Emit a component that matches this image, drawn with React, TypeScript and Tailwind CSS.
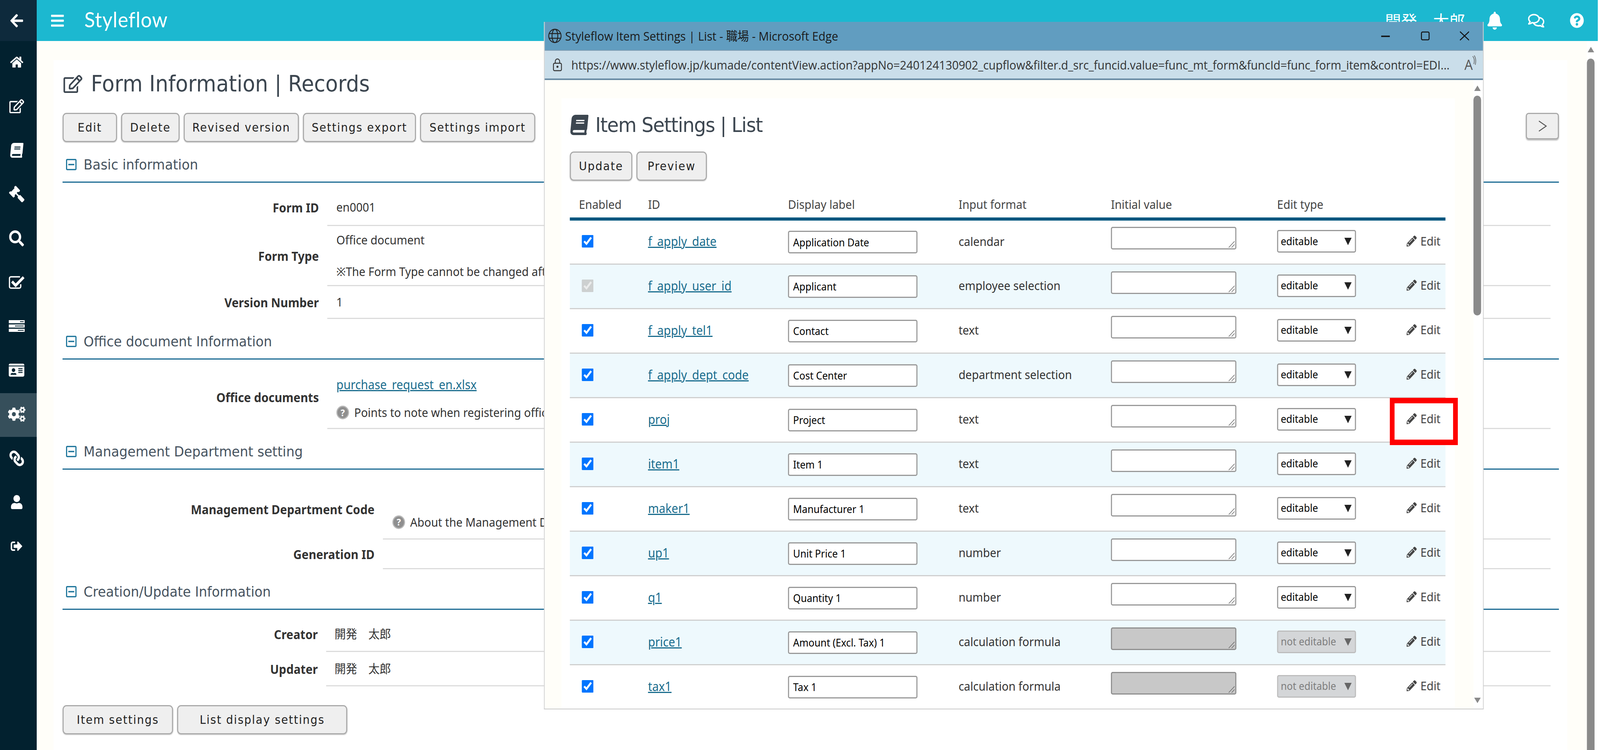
import React from 'react';
import { FaArrowLeft, FaHome, FaRegEdit, FaBook, FaGavel, FaSearch, FaIdCard, FaCogs, FaLink, FaUser, FaSignOutAlt, FaBars, FaBell, FaRegComments, FaQuestionCircle, FaRegMinusSquare, FaPencilAlt } from 'react-icons/fa';

function TasksIcon() {
  return (
    <svg viewBox="0 0 44 30" className="w-[44px] h-[30px]">
      <rect x="0" y="0" width="44" height="8" fill="#fff" />
      <rect x="0" y="11" width="44" height="8" fill="#fff" />
      <rect x="0" y="22" width="44" height="8" fill="#fff" />
      <rect x="31" y="3" width="10" height="2" fill="#02212f" />
      <rect x="17" y="14" width="24" height="2" fill="#02212f" />
      <rect x="25" y="25" width="16" height="2" fill="#02212f" />
    </svg>
  );
}

function CheckSquare() {
  return (
    <svg viewBox="0 0 44 34" className="w-[44px] h-[34px]" fill="none">
      <path d="M33 22v6a4 4 0 0 1-4 4H6a4 4 0 0 1-4-4V7a4 4 0 0 1 4-4h25" stroke="#fff" strokeWidth="3.5" />
      <path d="M9 15l10 10L41 4" stroke="#fff" strokeWidth="7" />
    </svg>
  );
}

function Btn({ label, className }: { label: string; className: string }) {
  return (
    <button className={`h-[75px] bg-[#efefef] border-[3px] border-[#aaaaaa] rounded-[11px] shadow-[0_2px_2px_rgba(0,0,0,0.15)] text-[#222] text-[30px] tracking-[2.2px] font-['DejaVu_Sans',sans-serif] ${className}`}>
      {label}
    </button>
  );
}

function Head({ label }: { label: string }) {
  return (
    <div className="h-[104px] flex items-end pb-[19px] pl-[8px] border-b-[3px] border-[#1b6a93] text-[#46535f] font-['DejaVu_Sans','Noto_Sans_CJK_JP',sans-serif] text-[36px] gap-[18px] leading-[48px]">
      <FaRegMinusSquare className="text-[#1f769c] w-[32px] h-[33px] mb-[8px]" />
      <span>{label}</span>
    </div>
  );
}

function Help({ label }: { label: string }) {
  return (
    <div className="flex items-center gap-[14px] h-[40px]">
      <span className="w-[35px] h-[35px] rounded-full bg-[#8f8f8f] border-[3px] border-[#b9b9b9] flex items-center justify-center text-white text-[24px] font-bold leading-none">?</span>
      <span>{label}</span>
    </div>
  );
}

const navIcons = [
  <FaHome className="w-[40px] h-[32px]" />,
  <FaRegEdit className="w-[44px] h-[36px]" />,
  <FaBook className="w-[40px] h-[38px] -skew-x-6" />,
  <FaGavel className="w-[44px] h-[42px] -scale-x-100" />,
  <FaSearch className="w-[41px] h-[41px]" />,
  <CheckSquare />,
  <TasksIcon />,
  <FaIdCard className="w-[51px] h-[38px]" />,
  <FaCogs className="w-[48px] h-[44px]" />,
  <FaLink className="w-[42px] h-[40px] -scale-x-100" />,
  <FaUser className="w-[34px] h-[36px]" />,
  <FaSignOutAlt className="w-[41px] h-[32px]" />,
];

const items: [string, string, string, boolean?, boolean?][] = [
  ['f_apply_date', 'Application Date', 'calendar'],
  ['f_apply_user_id', 'Applicant', 'employee selection', true],
  ['f_apply_tel1', 'Contact', 'text'],
  ['f_apply_dept_code', 'Cost Center', 'department selection'],
  ['proj', 'Project', 'text'],
  ['item1', 'Item 1', 'text'],
  ['maker1', 'Manufacturer 1', 'text'],
  ['up1', 'Unit Price 1', 'number'],
  ['q1', 'Quantity 1', 'number'],
  ['price1', 'Amount (Excl. Tax) 1', 'calculation formula', false, true],
  ['tax1', 'Tax 1', 'calculation formula', false, true],
];

function ItemRow({ item, index }: { item: (typeof items)[number]; index: number }) {
  const [id, label, format, locked, off] = item;
  return (
    <div className={`grid grid-cols-[215px_385px_469px_419px_457px_356px_107px] items-center border-b-[3px] border-[#d0d0d0] ${index === 0 ? 'h-[113px]' : 'h-[114px]'} ${index % 2 === 1 ? 'bg-[#eef9fd]' : 'bg-white'}`}>
      <div className="pl-[33px] h-[32px] mb-[4px]">
        <input type="checkbox" defaultChecked disabled={locked} className="w-[32px] h-[32px] m-0 block" />
      </div>
      <a className="text-[32px] text-[#1a6d8e] underline decoration-[3px] mb-[4px]">{id}</a>
      <input readOnly defaultValue={label} className="w-[356px] h-[58px] border-[3px] border-[#999] rounded-[5px] bg-white pl-[11px] text-[27px] text-black outline-none" />
      <div className="mb-[4px]">{format}</div>
      <div className={`relative w-[345px] h-[58px] mb-[20px] border-[3px] rounded-[5px] ${off ? 'bg-[#c8c8c8] border-[#8f8f8f]' : 'bg-white border-[#999]'}`}>
        <svg viewBox="0 0 20 20" className="absolute right-[1px] bottom-[1px] w-[20px] h-[20px]" stroke="#666" strokeWidth="1.6">
          <path d="M3 19L19 3M11 19l8-8" />
        </svg>
      </div>
      <div className={`flex items-center justify-between w-[217px] h-[58px] mb-[4px] border-[3px] rounded-[5px] pl-[7px] pr-[8px] text-[27px] ${off ? 'bg-[#d4d6d8] border-[#bdbdbd] text-[#7d7d7d]' : 'bg-white border-[#999] text-black'}`}>
        <span>{off ? 'not editable' : 'editable'}</span>
        <svg viewBox="0 0 22 20" className="w-[22px] h-[20px]"><path d="M1 1h20L11 20z" fill={off ? '#666' : '#222'} /></svg>
      </div>
      <div className="flex items-center gap-[10px] mb-[6px] text-[#444]">
        <FaPencilAlt className="w-[28px] h-[29px] text-[#444]" />
        <span>Edit</span>
      </div>
    </div>
  );
}

function InfoRow({ label, rowClass, thClass, tdClass, children }: { label: string; rowClass: string; thClass: string; tdClass: string; children?: React.ReactNode }) {
  return (
    <div className={`flex pr-[23px] ${rowClass}`}>
      <div className={`shrink-0 flex items-center justify-end pr-[23px] text-[32px] font-bold text-[#333] ${thClass}`}>{label}</div>
      <div className={`flex-1 flex flex-col justify-center border-b-[3px] border-[#dcdcdc] ${tdClass}`}>{children}</div>
    </div>
  );
}

// The sandbox browser caps its viewport at 4096px wide, while the page is designed
// on a 4400px canvas. Fit the canvas to the real viewport width so nothing is cut off.
const fitX = Math.min(1, window.innerWidth / 4400);

export default function App() {
  return (
    <div className="w-full h-[1921px] overflow-hidden">
      <div style={{ transform: `scaleX(${fitX})` }} className="relative origin-top-left flex w-[4400px] h-[1921px] overflow-hidden bg-white text-[#333] text-[31px] font-['Noto_Sans','Noto_Sans_CJK_JP',sans-serif]">
        {/* sidebar */}
        <nav className="w-[101px] shrink-0 bg-[#02212f] text-white flex flex-col">
          <div className="h-[105px] bg-[#0e2a3c] flex items-center justify-center pr-[10px]"><FaArrowLeft className="w-[38px] h-[40px]" /></div>
          {navIcons.map((icon, i) => (
            <div key={i} className={`h-[112.7px] flex items-center justify-center pr-[10px] pb-[4px] ${i === 8 ? 'bg-[#364f5b]' : ''}`}>{icon}</div>
          ))}
        </nav>

        <div className="w-[4293px] shrink-0 flex flex-col">
          {/* top bar */}
          <header className="h-[105px] shrink-0 bg-[#1cb8d0] flex items-center text-white">
            <FaBars className="ml-[37px] w-[40px] h-[40px]" />
            <span className="ml-[54px] text-[54px] leading-none font-['Lato',sans-serif] tracking-[1px] pb-[6px]">Styleflow</span>
            <span className="ml-auto text-[44px] font-['Noto_Sans_CJK_JP',sans-serif] whitespace-pre mr-[61px]">開発　太郎</span>
            <FaBell className="w-[41px] h-[46px]" />
            <FaRegComments className="ml-[71px] w-[45px] h-[42px]" />
            <FaQuestionCircle className="ml-[70px] mr-[38px] w-[39px] h-[39px]" />
          </header>

          <div className="flex-1 flex min-h-0">
            <div className="w-[4263px] shrink-0 bg-[#fffef9] pt-[49px] pl-[46px]">
              <main className="relative w-[4163px] h-[1800px] bg-white pl-[25px] pr-[23px]">
                <h1 className="h-[135px] pb-[13px] flex items-center gap-[21px] text-[56.5px] leading-none text-[#3c4650] font-['DejaVu_Sans',sans-serif] font-normal">
                  <FaRegEdit className="w-[57px] h-[46px] text-[#3c4650]" />
                  <span>Form Information | Records</span>
                </h1>
                <div className="flex gap-[11px]">
                  <Btn label="Edit" className="w-[150px]" />
                  <Btn label="Delete" className="w-[161px]" />
                  <Btn label="Revised version" className="w-[317px]" />
                  <Btn label="Settings export" className="w-[311px]" />
                  <Btn label="Settings import" className="w-[317px]" />
                  <button className="ml-auto h-[68px] w-[91px] bg-[#efefef] border-[3px] border-[#aaaaaa] rounded-[8px] shadow-[0_3px_3px_rgba(0,0,0,0.25)] flex items-center justify-center">
                    <svg viewBox="0 0 24 30" className="w-[24px] h-[30px]" fill="none" stroke="#555" strokeWidth="2.5"><path d="M2 2l20 13L2 28" /></svg>
                  </button>
                </div>

                <Head label="Basic information" />
                <InfoRow rowClass="h-[111px]" thClass="w-[728px] pt-[16px]" tdClass="pl-[25px] pt-[16px]" label="Form ID"><div>en0001</div></InfoRow>
                <InfoRow rowClass="h-[154px]" thClass="w-[728px]" tdClass="pl-[25px] gap-[35px]" label="Form Type">
                  <div>Office document</div>
                  <div>※The Form Type cannot be changed after it has been registered.</div>
                </InfoRow>
                <InfoRow rowClass="h-[84px]" thClass="w-[728px]" tdClass="pl-[25px]" label="Version Number"><div>1</div></InfoRow>

                <Head label="Office document Information" />
                <InfoRow rowClass="h-[178px]" thClass="w-[728px] pt-[16px]" tdClass="pl-[25px] pt-[20px] gap-[28px]" label="Office documents">
                  <a className="text-[32px] text-[#1a6d8e] underline decoration-[3px]">purchase_request_en.xlsx</a>
                  <Help label="Points to note when registering office documents" />
                </InfoRow>

                <Head label="Management Department setting" />
                <InfoRow rowClass="h-[179px]" thClass="w-[881px] self-start pt-[78px]" tdClass="pl-[26px] pt-[114px] justify-start" label="Management Department Code">
                  <Help label="About the Management Department Code" />
                </InfoRow>
                <InfoRow rowClass="h-[76px]" thClass="w-[881px]" tdClass="pl-[26px]" label="Generation ID" />

                <Head label="Creation/Update Information" />
                <InfoRow rowClass="h-[108px]" thClass="w-[725px] pt-[18px]" tdClass="pl-[23px] pt-[18px]" label="Creator"><div className="whitespace-pre">開発　太郎</div></InfoRow>
                <InfoRow rowClass="h-[88px]" thClass="w-[725px]" tdClass="pl-[23px]" label="Updater"><div className="whitespace-pre">開発　太郎</div></InfoRow>

                <div className="flex gap-[11px] mt-[48px]">
                  <Btn label="Item settings" className="w-[304px]" />
                  <Btn label="List display settings" className="w-[468px]" />
                </div>
              </main>
            </div>
            <div className="flex-1 flex flex-col items-stretch bg-white">
              <div className="w-[21px] flex-1 flex flex-col items-center pt-[15px]">
                <svg viewBox="0 0 18 14" className="w-[18px] h-[14px]"><path d="M9 0l9 14H0z" fill="#8a8a8a" /></svg>
                <div className="mt-[16px] w-full flex-1 bg-[#8a8a8a] rounded-t-full" />
              </div>
            </div>
          </div>
        </div>

        {/* popup window */}
        <section className="absolute left-[1496px] top-[56px] w-[2584px] h-[1761px] flex flex-col border-x-[2px] border-b-[2px] border-[#c9c9c9] bg-white">
          <div className="h-[72px] shrink-0 bg-[#619dc0] flex items-center text-[#1a1a1a] text-[31.5px] font-['Open_Sans','Noto_Sans_CJK_JP',sans-serif]">
            <svg viewBox="0 0 38 38" className="ml-[9px] w-[38px] h-[38px]" fill="none" stroke="#222" strokeWidth="2.4">
              <circle cx="19" cy="19" r="17" />
              <ellipse cx="19" cy="19" rx="8" ry="17" />
              <path d="M3 13h32M3 25h32" />
            </svg>
            <span className="ml-[9px]">Styleflow Item Settings | List - 職場 - Microsoft Edge</span>
            <svg viewBox="0 0 242 24" className="ml-auto mr-[38px] w-[242px] h-[24px]" fill="none" stroke="#111" strokeWidth="2.6">
              <path d="M0 13h24" strokeWidth="3.4" />
              <rect x="111" y="2" width="21" height="20" rx="3" />
              <path d="M217 1l25 22M242 1l-25 22" />
            </svg>
          </div>
          <div className="h-[77px] shrink-0 bg-[#cadeea] border-t-[2px] border-[#7f9db3] border-b-[4px] border-b-[#6a8ca5] flex items-center text-[#333] text-[31.4px] font-['Open_Sans',sans-serif]">
            <svg viewBox="0 0 26 34" className="ml-[22px] w-[26px] h-[34px]" fill="none" stroke="#333" strokeWidth="2.4">
              <rect x="2" y="13" width="22" height="19" rx="3" />
              <path d="M7 13V8a6 6 0 0 1 12 0v5" />
              <circle cx="13" cy="22" r="1.6" fill="#333" />
            </svg>
            <span className="ml-[25px] whitespace-nowrap">https://www.styleflow.jp/kumade/contentView.action?appNo=240124130902_cupflow&amp;filter.d_src_funcid.value=func_mt_form&amp;funcId=func_form_item&amp;control=EDI...</span>
            <span className="ml-auto mr-[18px] text-[36px] leading-none text-[#555] relative pr-[10px]">A<svg viewBox="0 0 10 30" className="absolute right-0 -top-[6px] w-[12px] h-[30px]" fill="none" stroke="#555" strokeWidth="1.6"><path d="M1 2c5 6 5 14 3 20M5 0c5 7 5 16 3 24" /></svg></span>
          </div>
          <div className="flex-1 flex min-h-0 bg-[#fffef9]">
            <div className="relative flex-1 flex overflow-hidden pt-[47px] pl-[46px]">
              <div className="w-[2457px] bg-white pl-[23px] overflow-hidden">
                <h2 className="h-[136px] flex items-center gap-[18px] text-[52px] tracking-[-1.5px] leading-none text-[#3c4650] font-['DejaVu_Sans',sans-serif] font-normal">
                  <FaBook className="w-[52px] h-[52px] text-[#3c4650] -skew-x-6" />
                  <span>Item Settings | List</span>
                </h2>
                <div className="flex gap-[11px]">
                  <Btn label="Update" className="w-[172px]" />
                  <Btn label="Preview" className="w-[194px]" />
                </div>
                <div className="mt-[21px] w-[2408px]">
                  <div className="h-[81px] grid grid-cols-[215px_385px_469px_419px_457px_356px_107px] items-center pt-[6px] border-b-[8px] border-[#00567f] text-[#444]">
                    <div className="pl-[25px]">Enabled</div>
                    <div>ID</div>
                    <div>Display label</div>
                    <div>Input format</div>
                    <div>Initial value</div>
                    <div>Edit type</div>
                    <div />
                  </div>
                  {items.map((it, i) => <ItemRow key={it[0]} item={it} index={i} />)}
                </div>
              </div>
            </div>
            <div className="w-[26px] shrink-0 bg-white">
              <div className="h-full w-[21px] flex flex-col items-center pt-[14px]">
                <svg viewBox="0 0 18 14" className="w-[18px] h-[14px]"><path d="M9 0l9 14H0z" fill="#8a8a8a" /></svg>
                <div className="mt-[12px] w-full h-[563px] bg-[#8a8a8a] rounded-full" />
                <svg viewBox="0 0 18 14" className="mt-auto mb-[14px] w-[18px] h-[14px]"><path d="M0 0h18L9 14z" fill="#8a8a8a" /></svg>
              </div>
            </div>
          </div>
        </section>

        {/* highlight */}
        <div className="absolute left-[3822px] top-[1019px] w-[187px] h-[121px] border-y-[14px] border-x-[13px] border-[#ff0000]" />
      </div>
    </div>
  );
}
